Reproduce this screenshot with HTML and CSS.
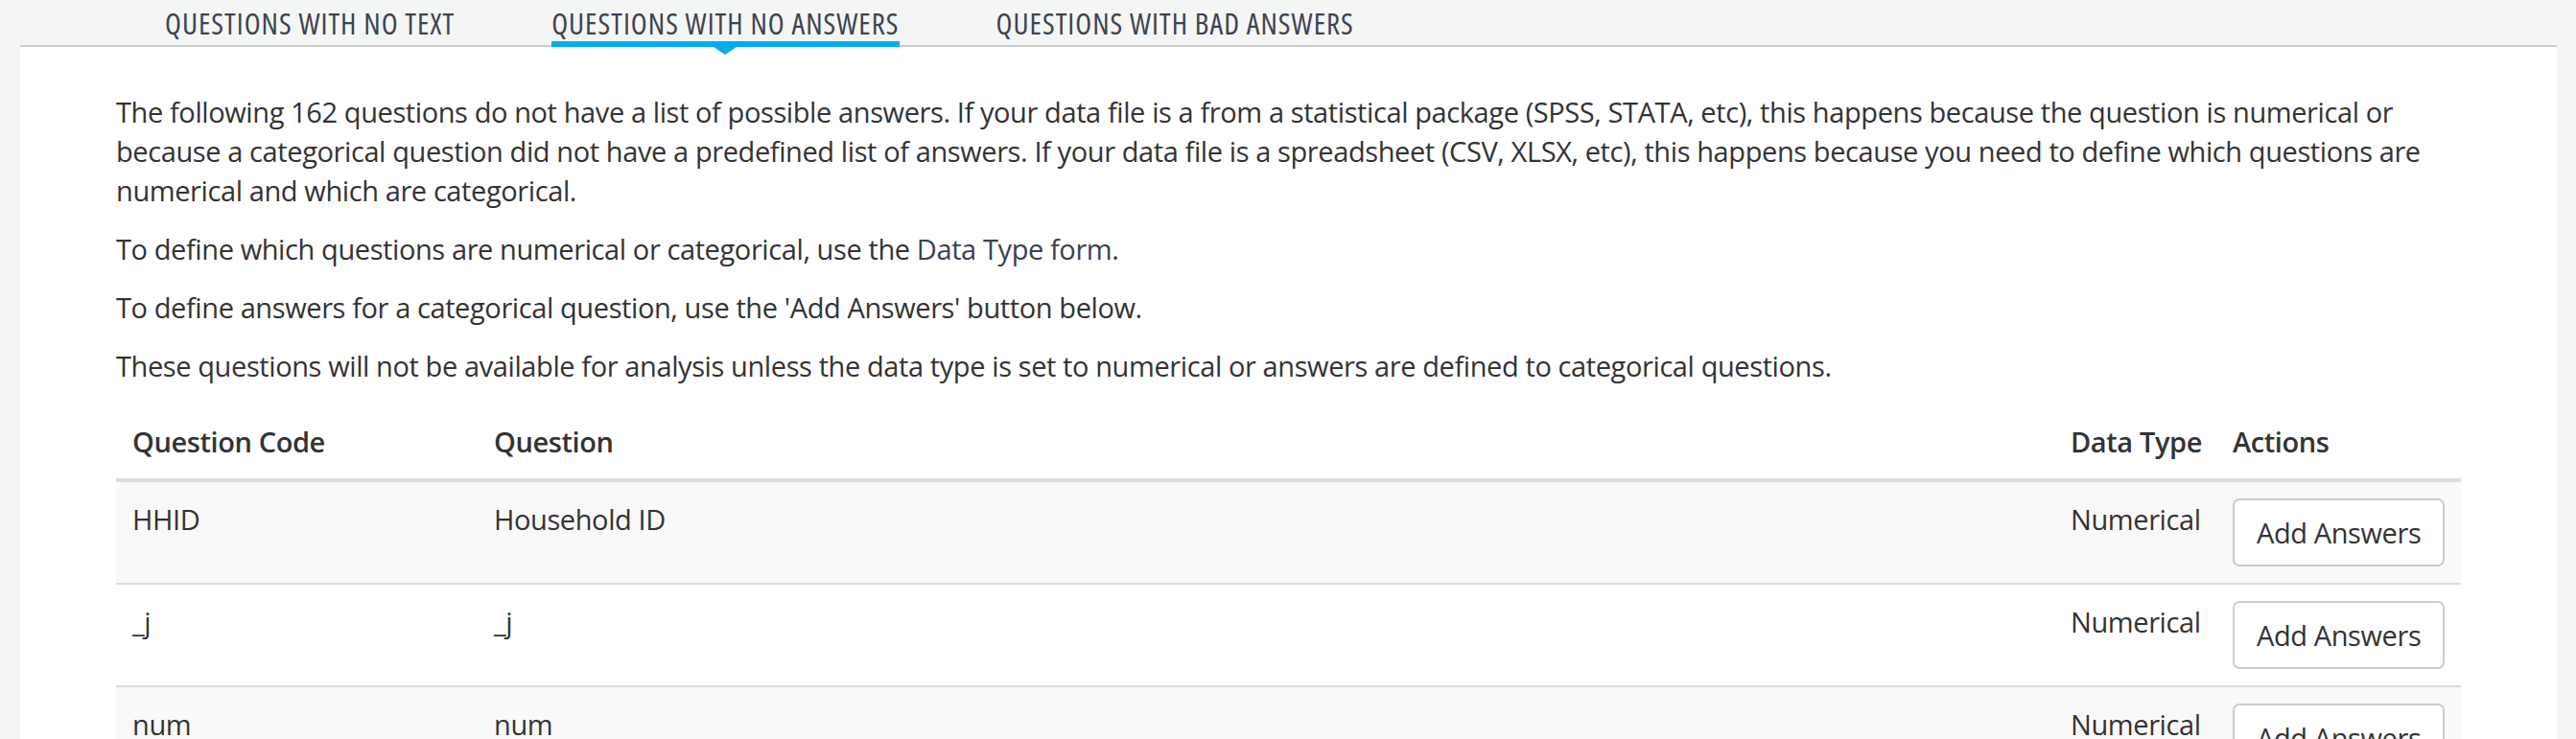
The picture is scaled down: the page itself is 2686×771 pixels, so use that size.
FILE: index.html
```html
<!DOCTYPE html>
<html lang="en">
<head>
<meta charset="utf-8">
<title>Questions with no answers</title>
<link rel="stylesheet" href="styles.css">
</head>
<body>
<div class="page">
  <nav class="tabbar">
    <a class="tab" href="#">QUESTIONS WITH NO TEXT</a>
    <a class="tab active" href="#">QUESTIONS WITH NO ANSWERS</a>
    <a class="tab" href="#">QUESTIONS WITH BAD ANSWERS</a>
  </nav>
  <main class="panel">
    <div class="intro">
      <p>The following 162 questions do not have a list of possible answers. If your data file is a from a statistical package (SPSS, STATA, etc), this happens because the question is numerical or because a categorical question did not have a predefined list of answers. If your data file is a spreadsheet (CSV, XLSX, etc), this happens because you need to define which questions are numerical and which are categorical.</p>
      <p>To define which questions are numerical or categorical, use the <a class="link" href="#">Data Type form</a>.</p>
      <p>To define answers for a categorical question, use the 'Add Answers' button below.</p>
      <p>These questions will not be available for analysis unless the data type is set to numerical or answers are defined to categorical questions.</p>
    </div>
    <table class="qtable">
      <colgroup>
        <col class="c-code">
        <col class="c-q">
        <col class="c-type">
        <col class="c-act">
      </colgroup>
      <thead>
        <tr><th>Question Code</th><th>Question</th><th>Data Type</th><th>Actions</th></tr>
      </thead>
      <tbody>
        <tr><td>HHID</td><td>Household ID</td><td>Numerical</td><td><button class="btn" type="button">Add Answers</button></td></tr>
        <tr><td>_j</td><td>_j</td><td>Numerical</td><td><button class="btn" type="button">Add Answers</button></td></tr>
        <tr><td>num</td><td>num</td><td>Numerical</td><td><button class="btn" type="button">Add Answers</button></td></tr>
      </tbody>
    </table>
  </main>
</div>
</body>
</html>
```
FILE: styles.css
```css
* { box-sizing: border-box; }

html, body {
  margin: 0;
  padding: 0;
}

body {
  background: #f4f6f5;
  color: #333333;
  font-family: "Open Sans", Lato, sans-serif;
  font-size: 29px;
  line-height: 41px;
  letter-spacing: -0.4px;
}

.page {
  min-height: 100vh;
  display: flex;
  flex-direction: column;
}

.tabbar {
  margin: 0 20px 0 21px;
  height: 49px;
  border-bottom: 2px solid #cccccc;
  display: flex;
  align-items: flex-start;
  gap: 101px;
  padding-left: 151px;
}

.tab {
  position: relative;
  display: block;
  height: 49px;
  padding-top: 9px;
  border-bottom: 6px solid transparent;
  color: #3d4350;
  text-decoration: none;
  font-family: "Open Sans", sans-serif;
  font-stretch: 75%;
  font-size: 31px;
  line-height: 30px;
  letter-spacing: 1px;
  white-space: nowrap;
}

.tab.active {
  border-bottom-color: #00aeef;
}

.tab.active::after {
  content: "";
  position: absolute;
  left: 50%;
  top: calc(100% + 6px);
  margin-left: -12px;
  border-left: 12px solid transparent;
  border-right: 12px solid transparent;
  border-top: 8px solid #00aeef;
}

.panel {
  flex: 1;
  margin: 0 20px 0 21px;
  background: #ffffff;
  padding: 47px 100px 0;
}

.intro p {
  margin: 0 0 20px;
}

.link {
  color: #3a4150;
  text-decoration: none;
}

.qtable {
  width: 100%;
  margin-top: 2px;
  border-collapse: separate;
  border-spacing: 0;
  table-layout: fixed;
}

.c-code { width: 377px; }
.c-type { width: 169px; }
.c-act { width: 255px; }

.qtable th {
  text-align: left;
  font-weight: 600;
  padding: 17px;
  line-height: 43px;
  border-bottom: 4px solid #dddddd;
  vertical-align: bottom;
  white-space: nowrap;
}

.qtable td {
  padding: 17px;
  line-height: 43px;
  vertical-align: top;
  white-space: nowrap;
}

.qtable tbody tr:nth-child(odd) td {
  background: #f9f9f9;
}

.qtable tbody tr + tr td {
  border-top: 2px solid #dddddd;
}

.btn {
  display: block;
  width: max-content;
  margin: 0;
  padding: 13px 23px;
  font-family: inherit;
  font-size: 29px;
  line-height: 41px;
  letter-spacing: inherit;
  color: #333333;
  background: #ffffff;
  border: 2px solid #cccccc;
  border-radius: 7px;
  cursor: pointer;
}
```
